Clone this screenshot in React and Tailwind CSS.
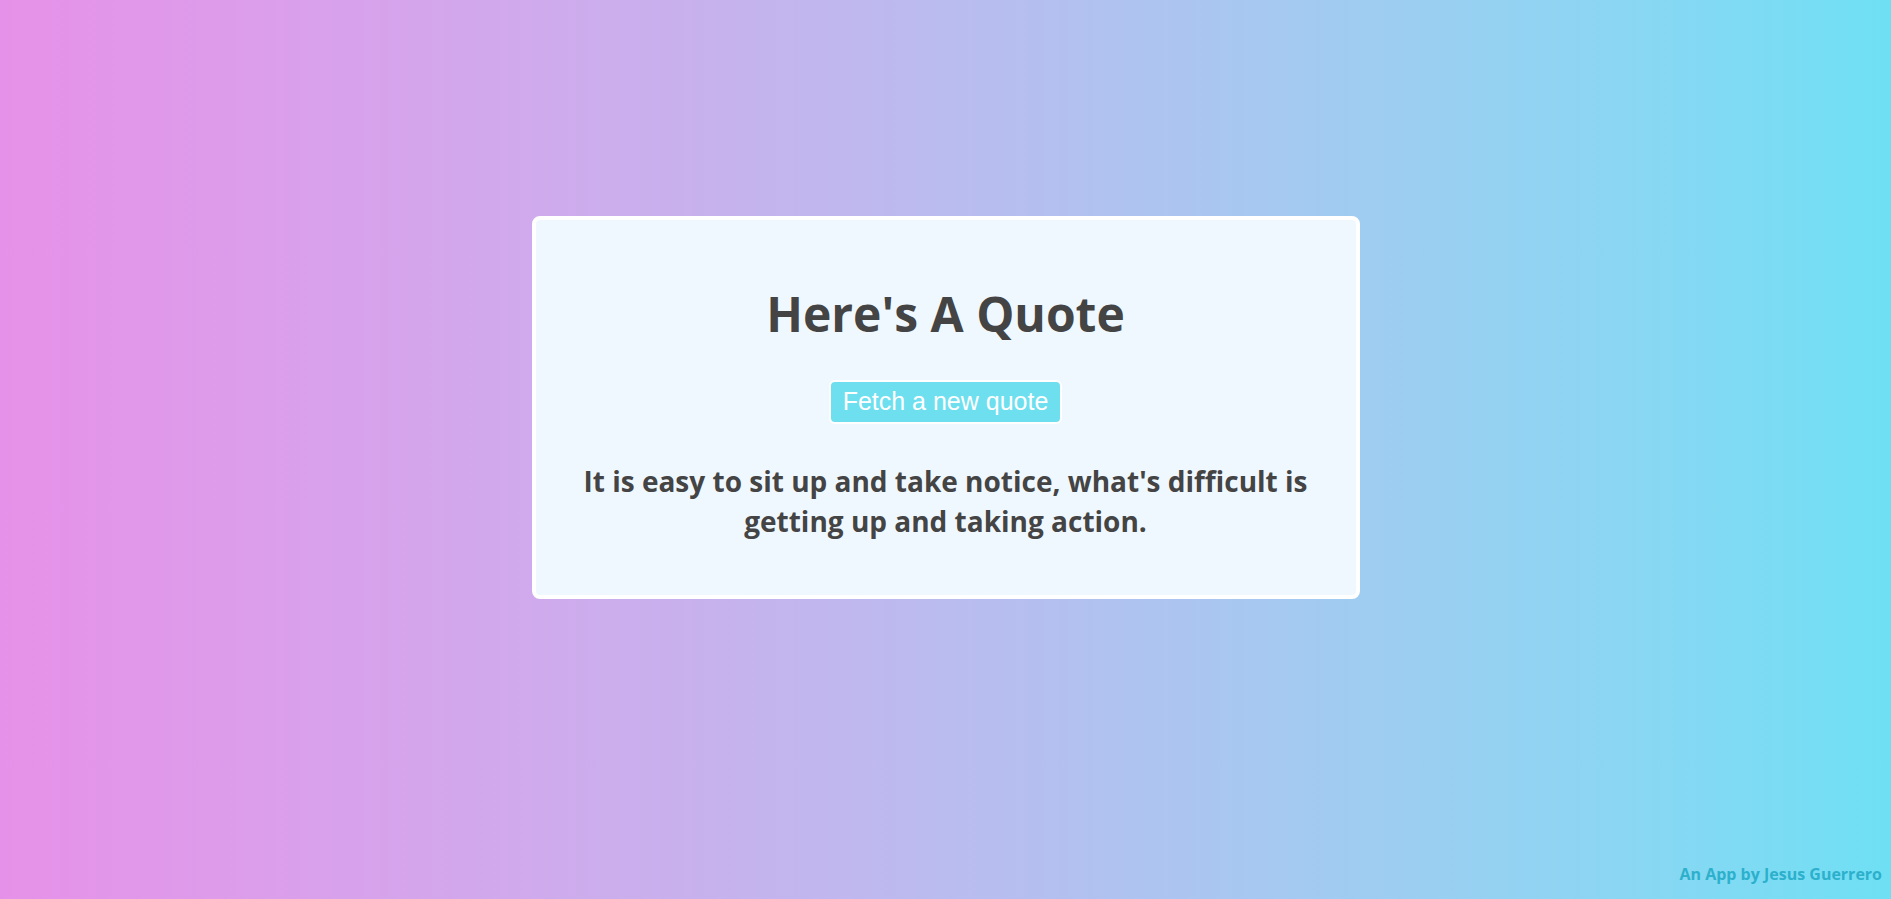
export default function App() {
  return (
    <div className="relative flex min-h-screen w-full flex-col items-center bg-gradient-to-r from-[#e691e9] to-[#6ee0f4] pt-[216px] font-['Open_Sans',sans-serif]">
      {/* Quote card */}
      <div className="flex w-[828px] flex-col items-center rounded-lg border-4 border-white bg-[#f0f8ff] px-8 pt-[62px] pb-[54px] text-center text-[#444]">
        <h1 className="text-[48px] leading-[64px] font-bold">Here's A Quote</h1>
        <button
          type="button"
          className="mt-[34px] h-[44px] rounded-md border-2 border-white bg-[#6ddfef] px-[12px] font-['Liberation_Sans',sans-serif] text-[25px] text-white"
        >
          Fetch a new quote
        </button>
        <p className="mt-[37px] text-[28px] leading-[40px] font-bold">
          It is easy to sit up and take notice, what's difficult is getting up and taking action.
        </p>
      </div>

      {/* Footer credit */}
      <div className="absolute right-[9px] bottom-[13px] text-[16px] font-bold text-[#2cb0cc]">
        An App by Jesus Guerrero
      </div>
    </div>
  );
}
